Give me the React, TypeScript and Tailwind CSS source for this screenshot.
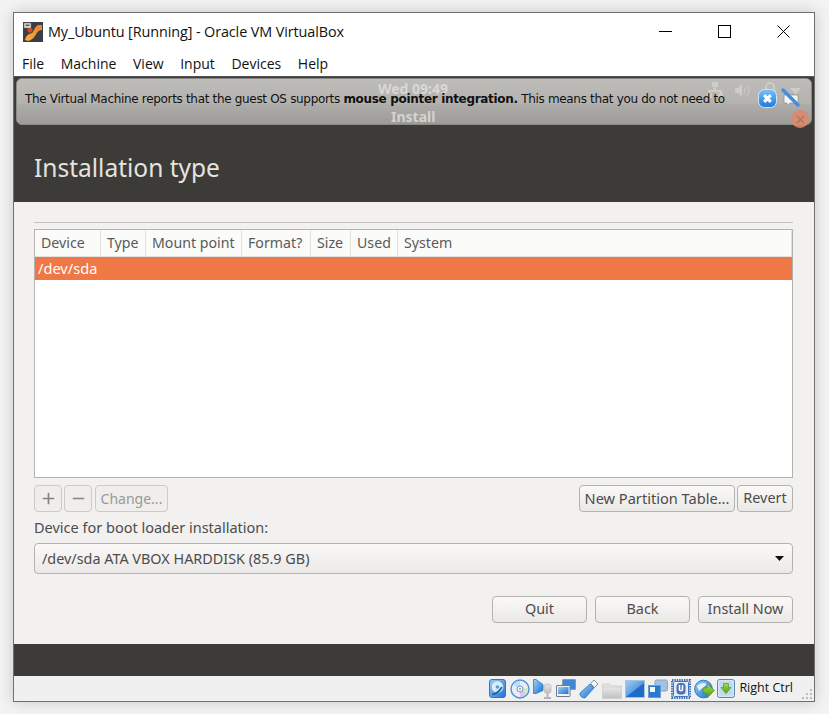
import { Minus, Plus } from "lucide-react";

const sans = "font-['Open_Sans','Noto_Sans',sans-serif]";
const ubuntu = "font-['Noto_Sans','Open_Sans',sans-serif]";

const menus = ["File", "Machine", "View", "Input", "Devices", "Help"];

const columns = [
  { label: "Device", width: "w-[66px]" },
  { label: "Type", width: "w-[45px]" },
  { label: "Mount point", width: "w-[96px]" },
  { label: "Format?", width: "w-[69px]" },
  { label: "Size", width: "w-[40px]" },
  { label: "Used", width: "w-[47px]" },
  { label: "System", width: "flex-1" },
];

function AppIcon() {
  return (
    <svg width="20" height="20" viewBox="0 0 20 20" className="shrink-0">
      <defs>
        <linearGradient id="vbWave" x1="0" y1="1" x2="1" y2="0">
          <stop offset="0" stopColor="#f6b13c" />
          <stop offset="1" stopColor="#e8832a" />
        </linearGradient>
      </defs>
      <rect width="20" height="20" fill="#3b3e46" />
      <path d="M2 18 C3 13 6 12 9 11 C11 10 11 5 15 3 L19 3 L19 8 C15 8 14 11 12 14 C10 17 8 18 5 19 Z" fill="url(#vbWave)" />
      <circle cx="7" cy="8" r="2.6" fill="#d9481c" />
      <rect x="1" y="1" width="7" height="5" fill="#e6e6e6" stroke="#666" strokeWidth="0.6" />
      <rect x="2.5" y="2.5" width="4" height="1.6" fill="#555" />
    </svg>
  );
}

function GhostIcons() {
  return (
    <>
      <svg width="16" height="17" viewBox="0 0 16 17" className="absolute left-[690px] top-[3px] opacity-60">
        <path d="M5 0h6v5H9v3h6v3h1v5h-5v-5h2V10H3v1h2v5H0v-5h1V8h6V5H5z" fill="#dcdbd8" />
      </svg>
      <svg width="15" height="13" viewBox="0 0 15 13" className="absolute left-[718px] top-[5px] opacity-60">
        <path d="M0 4h3l4-4v13l-4-4H0z" fill="#dcdbd8" />
        <path d="M9 3q2.500 3.500 0 7M12 1q4 5.500 0 11" fill="none" stroke="#dcdbd8" />
      </svg>
      <svg width="14" height="17" viewBox="0 0 14 17" className="absolute left-[746px] top-[3px] opacity-60">
        <path d="M3 8V5a4 4 0 0 1 8 0v3" fill="none" stroke="#dcdbd8" strokeWidth="2" />
        <rect x="1" y="8" width="12" height="8" rx="1" fill="#dcdbd8" />
      </svg>
      <svg width="11" height="7" viewBox="0 0 11 7" className="absolute left-[773px] top-[9px] opacity-60">
        <path d="M0 0h11L5.500 7z" fill="#dcdbd8" />
      </svg>
    </>
  );
}

function Notification() {
  return (
    <div className="absolute left-[2px] top-[65px] w-[796px] h-[47px] rounded-[6px] border border-[#8b8a86] bg-[#b0afab]">
      <div className="h-[25px] rounded-t-[5px] bg-gradient-to-b from-[#bdbcb9] to-[#b3b2ae]" />
      <div className="h-[20px] rounded-b-[5px] bg-gradient-to-b from-[#aeada9] to-[#9c9b97]" />
      <span className={`absolute left-[361px] top-[3px] text-[14px] leading-[14px] font-bold text-[#d9d8d5] ${ubuntu}`}>Wed 09:49</span>
      <span className={`absolute left-[374px] top-[31px] text-[14px] leading-[14px] font-bold text-[#d4d3d0] ${ubuntu}`}>Install</span>
      <GhostIcons />
      <p className="absolute left-[8px] top-[12px] whitespace-nowrap text-[12px] leading-[17px] text-[#111] font-['DejaVu_Sans',sans-serif] tracking-[-0.32px]">
        The Virtual Machine reports that the guest OS supports <b>mouse pointer integration.</b> This means that you do not need to
      </p>
      <svg width="19" height="19" viewBox="0 0 19 19" className="absolute left-[741px] top-[10px]">
        <defs>
          <linearGradient id="closeBlue" x1="0" y1="0" x2="0" y2="1">
            <stop offset="0" stopColor="#7cc0f5" />
            <stop offset="1" stopColor="#1f78e0" />
          </linearGradient>
        </defs>
        <rect x="0.5" y="0.5" width="18" height="18" rx="6" fill="url(#closeBlue)" stroke="#cfe6fa" />
        <path d="M6.200 6.200l6.600 6.600M12.800 6.200l-6.600 6.600" stroke="#fff" strokeWidth="3.200" />
      </svg>
      <svg width="20" height="20" viewBox="0 0 20 20" className="absolute left-[764px] top-[8px]">
        <path d="M3 8h14v8H9l-3 3v-3H3z" fill="#f4f4f4" stroke="#8a8a8a" strokeWidth="0.7" />
        <path d="M2 3l15 15" stroke="#3f8fe4" strokeWidth="3.400" strokeLinecap="round" />
      </svg>
      <div className="absolute left-[774px] top-[31px] size-[18px] rounded-full bg-[#dc8a6c]/90 flex items-center justify-center">
        <svg width="9" height="9" viewBox="0 0 9 9">
          <path d="M1 1l7 7M8 1l-7 7" stroke="#b0715a" strokeWidth="1.200" />
        </svg>
      </div>
    </div>
  );
}

function GtkButton({ children, className = "", disabled = false }: { children: React.ReactNode; className?: string; disabled?: boolean }) {
  return (
    <button
      className={`h-[27px] rounded-[4px] border flex items-center justify-center leading-none ${ubuntu} ${
        disabled ? "bg-[#efeeec] text-[#9a9994] border-[#cdcbc7]" : "bg-gradient-to-b from-[#faf9f8] to-[#ebe9e7] text-[#4c4c4c] border-[#b5b3ae]"
      } ${className}`}
    >
      {children}
    </button>
  );
}

function StatusIcons() {
  return (
    <div className="flex items-center">
      <svg width="0" height="0" className="absolute">
        <defs>
          <linearGradient id="sbBlue" x1="0" y1="0" x2="1" y2="1">
            <stop offset="0" stopColor="#9fd0f6" />
            <stop offset="1" stopColor="#1d6fd0" />
          </linearGradient>
          <linearGradient id="sbGray" x1="0" y1="0" x2="0" y2="1">
            <stop offset="0" stopColor="#e4e4e4" />
            <stop offset="1" stopColor="#c2c2c2" />
          </linearGradient>
          <linearGradient id="sbGreen" x1="0" y1="0" x2="0" y2="1">
            <stop offset="0" stopColor="#a4dc4a" />
            <stop offset="1" stopColor="#4d9e22" />
          </linearGradient>
        </defs>
      </svg>
      {/* hard disk */}
      <svg width="17" height="19" viewBox="0 0 17 19" className="mr-[4px]">
        <rect x="0.5" y="0.5" width="16" height="18" rx="2.500" fill="url(#sbBlue)" stroke="#2a79c4" />
        <circle cx="8.500" cy="8" r="5.800" fill="#dcedfa" />
        <circle cx="8.500" cy="8" r="1.800" fill="#4f9ee0" />
        <path d="M3 15.500c4-.5 7-2.500 10-7.500" stroke="#1c5f9e" strokeWidth="1.600" fill="none" />
      </svg>
      {/* cd */}
      <svg width="20" height="20" viewBox="0 0 20 20" className="mr-[3px]">
        <circle cx="10" cy="10" r="9" fill="#e6eef7" stroke="#4b93d8" strokeWidth="1.400" />
        <path d="M10 10L3.500 6A8 8 0 0 1 10 2z" fill="#bcdcf5" />
        <path d="M10 10l6.500 4A8 8 0 0 1 10 18z" fill="#e2c6e8" />
        <path d="M10 10l8-1a8 8 0 0 1-1 5z" fill="#cfe8c8" />
        <circle cx="10" cy="10" r="3" fill="#f6f6f6" stroke="#6f97c4" />
        <circle cx="10" cy="10" r="1" fill="#7f9dbd" />
      </svg>
      {/* audio */}
      <svg width="21" height="20" viewBox="0 0 21 20" className="mr-[2px]">
        <path d="M0.500 0.500h2.500l7 5v6l-7 3h-2.500z" fill="url(#sbBlue)" stroke="#2a79c4" strokeWidth="0.800" />
        <rect x="11" y="5" width="7" height="9" rx="2.500" fill="url(#sbGray)" stroke="#aaa" strokeWidth="0.500" />
        <path d="M14.500 14v4M11 19h7" stroke="#b4b4b4" strokeWidth="1.800" />
      </svg>
      {/* network */}
      <svg width="20" height="20" viewBox="0 0 20 20" className="mr-[3px]">
        <rect x="6.500" y="0.500" width="13" height="10" rx="0.500" fill="#3f88d2" stroke="#8d9aa6" />
        <rect x="0.500" y="6.500" width="13.500" height="11" rx="0.500" fill="#eef3f8" stroke="#6f7c88" />
        <rect x="2" y="8" width="10.500" height="7" fill="url(#sbBlue)" />
      </svg>
      {/* usb */}
      <svg width="20" height="20" viewBox="0 0 20 20" className="mr-[3px]">
        <path d="M1 14L11 5l4 4-9 10q-2.500 0-4-1.500T1 14z" fill="url(#sbBlue)" stroke="#2a79c4" strokeWidth="0.800" />
        <path d="M11.500 4.500l3.500-3.500 4 4-3.500 3.500z" fill="#f2f4f6" stroke="#6d7680" strokeWidth="0.800" />
      </svg>
      {/* shared folder */}
      <svg width="20" height="17" viewBox="0 0 20 17" className="mr-[3px] mt-[3px]">
        <path d="M0.500 2h7l2 2h10v12.500H0.500z" fill="url(#sbGray)" stroke="#d2d2d2" />
        <rect x="1" y="6" width="18" height="10" fill="url(#sbGray)" />
      </svg>
      {/* display */}
      <svg width="20" height="18" viewBox="0 0 20 18" className="mr-[3px]">
        <rect x="0.500" y="0.500" width="19" height="17" fill="url(#sbBlue)" stroke="#a8c4dc" />
        <path d="M1 17L19 3v14z" fill="#1e6cc8" />
      </svg>
      {/* capture */}
      <svg width="20" height="20" viewBox="0 0 20 20" className="mr-[3px]">
        <rect x="7" y="1" width="12.500" height="11" rx="1.500" fill="#a4c0e2" stroke="#86a6ca" />
        <rect x="0.500" y="6.500" width="12" height="12" fill="#2a7ad4" stroke="#6a9ccc" />
        <rect x="2" y="8" width="5" height="5" fill="#f2f7fc" />
      </svg>
      {/* cpu */}
      <svg width="20" height="20" viewBox="0 0 20 20" className="mr-[3px]">
        <rect x="1" y="1" width="18" height="18" fill="none" stroke="#3a70b0" strokeWidth="2" strokeDasharray="1.400 1" />
        <rect x="2.500" y="2.500" width="15" height="15" rx="1" fill="#e4ecf6" stroke="#4678b8" />
        <rect x="5.500" y="4" width="9" height="11.500" rx="3.500" fill="#4e6fb8" />
        <path d="M8.500 6v5q1.500 1.500 3 0V6" fill="none" stroke="#fff" strokeWidth="1.600" />
      </svg>
      {/* guest additions */}
      <svg width="21" height="20" viewBox="0 0 21 20" className="mr-[2px]">
        <circle cx="9.500" cy="10" r="8.800" fill="url(#sbBlue)" stroke="#2a79c4" />
        <path d="M3 7q5-5 10-2-3 3-8 7z" fill="#e4f1fb" />
        <path d="M9 9h4V4.500l7.500 7L13 19v-4.500H9z" fill="url(#sbGreen)" stroke="#4a8c20" strokeWidth="0.600" />
      </svg>
      {/* host key arrow */}
      <svg width="18" height="19" viewBox="0 0 18 19" className="mr-[4px]">
        <rect x="0.500" y="0.500" width="17" height="18" rx="2" fill="#d6e5f3" stroke="#5a88b4" />
        <rect x="2.500" y="2.500" width="13" height="14" rx="1" fill="#c2d8ec" />
        <path d="M6.500 4.500h5v4h2.500L9 14.500l-5-6h2.500z" fill="url(#sbGreen)" stroke="#4a8c20" strokeWidth="0.600" />
      </svg>
    </div>
  );
}

export default function App() {
  return (
    <div className="w-[829px] h-[714px] bg-[#f3f3f3] pt-[12px] pl-[13px] overflow-hidden">
      <div className="relative w-[802px] h-[690px] border border-[#6f6f6f] bg-white flex flex-col shadow-[0_0_14px_rgba(0,0,0,0.18)]">
        {/* title bar */}
        <div className={`h-[37px] shrink-0 flex items-center pl-[9px] text-[#111] ${sans}`}>
          <AppIcon />
          <span className="ml-[5px] text-[14.4px] tracking-[-0.1px]">My_Ubuntu [Running] - Oracle VM VirtualBox</span>
          <div className="ml-auto flex items-center mr-[24px] gap-[46px]">
            <div className="w-[13px] h-px bg-black" />
            <div className="size-[13px] border border-black" />
            <svg width="13" height="13" viewBox="0 0 13 13">
              <path d="M0.500 0.500l12 12M12.500 0.500l-12 12" stroke="#000" strokeWidth="1" />
            </svg>
          </div>
        </div>
        {/* menu bar */}
        <div className={`h-[26px] shrink-0 flex items-center pl-[8px] gap-[16.6px] text-[14px] text-[#111] ${sans}`}>
          {menus.map((m) => (
            <span key={m}>{m}</span>
          ))}
        </div>
        {/* ubuntu header */}
        <div className="h-[126px] shrink-0 bg-[#3c3b37] border-t border-[#555] flex items-center pl-[20px] pt-[58px]">
          <h1 className={`text-[24.5px] text-[#e4e3e0] ${ubuntu}`}>Installation type</h1>
        </div>
        <Notification />
        {/* installer body */}
        <div className={`flex-1 bg-[#f2f1f0] pl-[20px] pr-[21px] pt-[20px] ${ubuntu}`}>
          <div className="h-px bg-[#c5c3bf]" />
          <div className="mt-[6px] h-[249px] border border-[#b5b3ae] bg-white">
            <div className="h-[27px] flex bg-[#fbfbfa] border-b border-[#e2e1de]">
              {columns.map((c) => (
                <div key={c.label} className={`${c.width} pl-[6px] flex items-center border-r border-[#e2e1de] text-[14.2px] text-[#5a5a58]`}>
                  {c.label}
                </div>
              ))}
            </div>
            <div className="h-[23px] bg-[#f07746] pl-[3px] flex items-center text-[14.6px] text-white">/dev/sda</div>
          </div>
          <div className="mt-[7px] flex items-center">
            <GtkButton disabled className="w-[28px] mr-[2px] !text-[#86857f]"><Plus size={17} strokeWidth={2.4} /></GtkButton>
            <GtkButton disabled className="w-[28px] mr-[3px] !text-[#86857f]"><Minus size={17} strokeWidth={2.4} /></GtkButton>
            <GtkButton disabled className="w-[73px] text-[14px]">Change...</GtkButton>
            <GtkButton className="ml-auto w-[156px] text-[14.6px]">New Partition Table...</GtkButton>
            <GtkButton className="ml-[2px] w-[56px] text-[14.4px]">Revert</GtkButton>
          </div>
          <p className="mt-[5px] text-[14.5px] leading-[20px] text-[#4c4c4c]">Device for boot loader installation:</p>
          <div className="mt-[6px] h-[31px] rounded-[4px] border border-[#b5b3ae] bg-gradient-to-b from-[#faf9f8] to-[#ebe9e7] flex items-center pl-[7px] pr-[8px] text-[14.4px] text-[#4c4c4c]">
            <span>/dev/sda ATA VBOX HARDDISK (85.9 GB)</span>
            <svg width="9" height="5" viewBox="0 0 9 5" className="ml-auto">
              <path d="M0 0h9L4.500 5z" fill="#111" />
            </svg>
          </div>
          <div className="mt-[22px] flex justify-end gap-[8px]">
            <GtkButton className="w-[95px] text-[14.4px]">Quit</GtkButton>
            <GtkButton className="w-[95px] text-[14.4px]">Back</GtkButton>
            <GtkButton className="w-[95px] text-[14.4px]">Install Now</GtkButton>
          </div>
        </div>
        <div className="h-[32px] shrink-0 bg-[#3c3b37]" />
        {/* status bar */}
        <div className={`h-[25px] shrink-0 bg-[#f0f0f0] flex items-center justify-end pr-[21px] text-[12.5px] text-[#111] ${sans}`}>
          <StatusIcons />
          <span>Right Ctrl</span>
          <svg width="10" height="10" viewBox="0 0 10 10" className="absolute right-[2px] bottom-[2px]">
            <path d="M8 0h2v2H8zM4 4h2v2H4zM8 4h2v2H8zM0 8h2v2H0zM4 8h2v2H4zM8 8h2v2H8z" fill="#bdbdbd" />
          </svg>
        </div>
      </div>
    </div>
  );
}
